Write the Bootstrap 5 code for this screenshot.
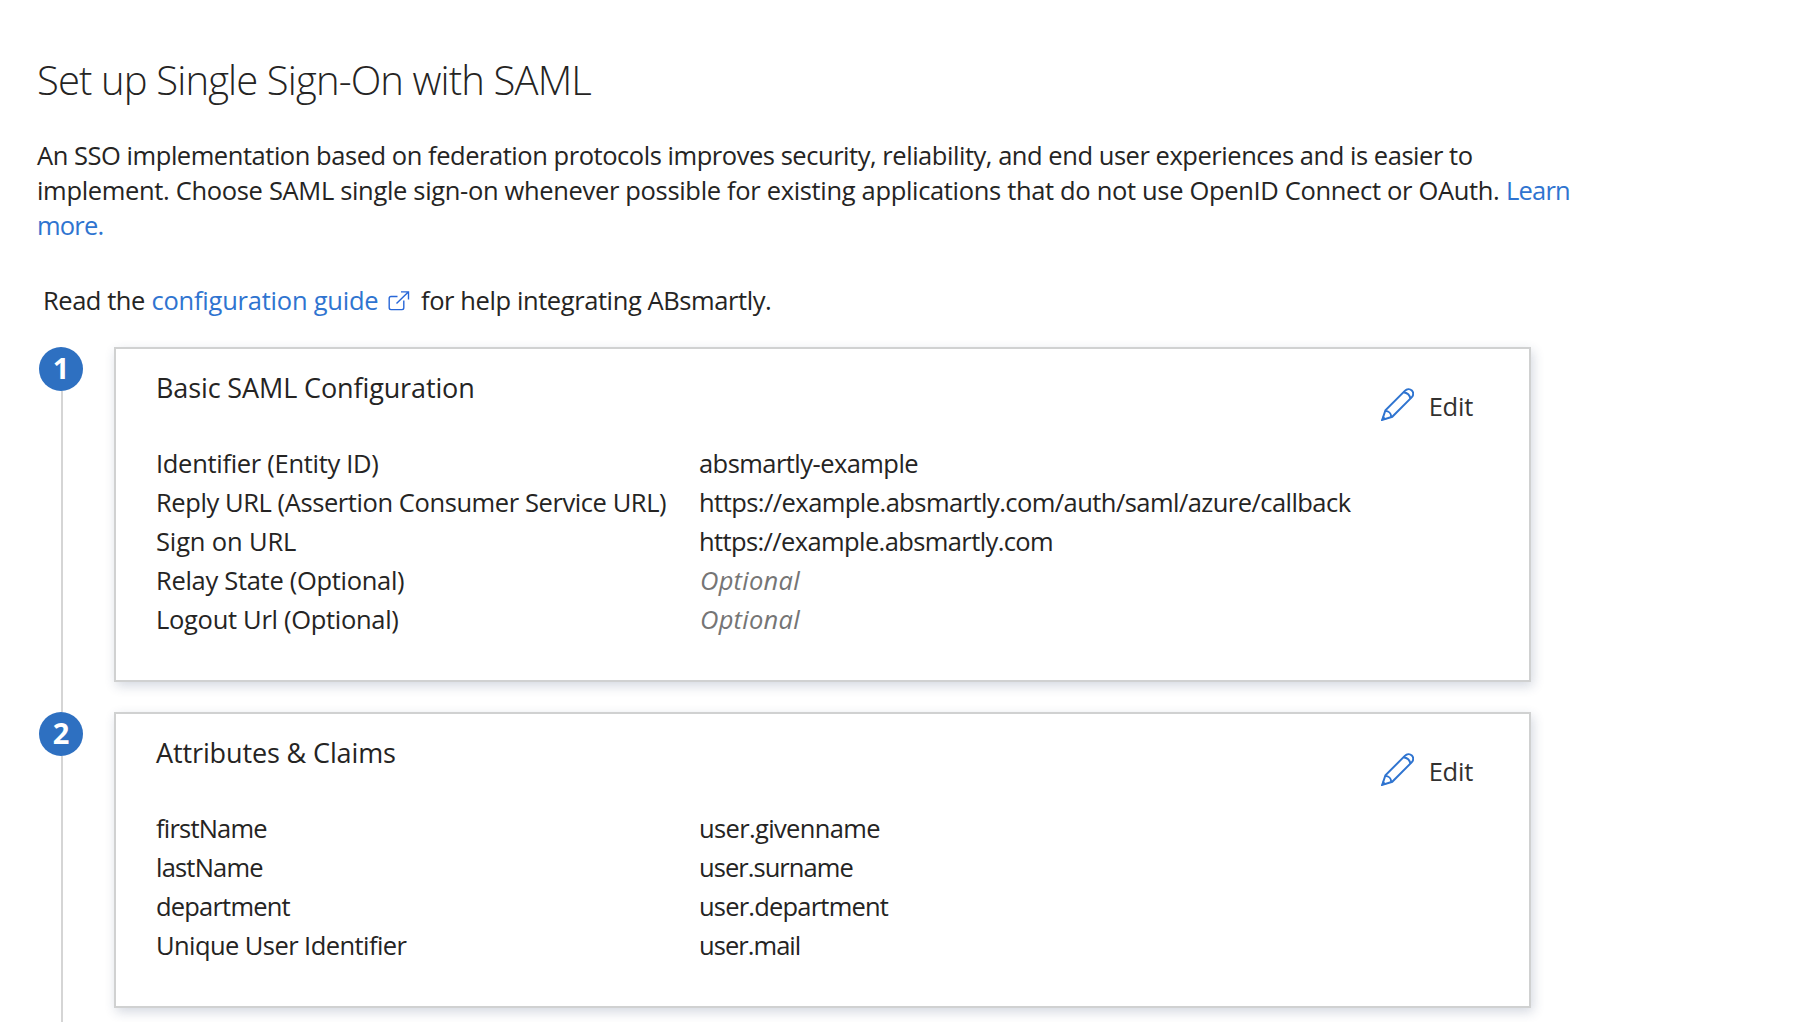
<!DOCTYPE html>
<html lang="en">
<head>
<meta charset="utf-8">
<title>Set up Single Sign-On with SAML</title>
<link rel="stylesheet" href="https://cdn.jsdelivr.net/npm/bootstrap@5.3.0/dist/css/bootstrap.min.css">
<style>
body { font-family: "Open Sans", "Noto Sans", sans-serif; font-size: 25.5px; line-height: 35px; color: #252423; background: #fff; }
.page { height: 1022px; padding: 53px 0 0 36px; white-space: nowrap; }
.page-title { font-size: 40px; line-height: 54px; font-weight: 300; letter-spacing: -.87px; margin: 0 0 31px 1px; }
.page a { color: #2f74d0; text-decoration: none; }
.intro { margin: 0 0 40px 1px; }
.intro-a { letter-spacing: -.458px; }
.intro-b { letter-spacing: -.332px; }
.intro-c { letter-spacing: -.8px; }
.guide { margin: 0 0 29px 7px; }
.guide-read { width: 108.5px; letter-spacing: -.454px; }
.guide-link { width: 236.5px; letter-spacing: -.23px; }
.guide-icon { width: 33px; padding-top: 8px; }
.guide-help { letter-spacing: -.41px; }
.step { gap: 31px; }
.step-rail { width: 44px; margin-left: 3px; }
.step-number { width: 44px; height: 44px; background: #2e70c1; color: #fff; font-size: 29px; font-weight: 700; line-height: 42px; }
.step-line { width: 2px; margin-left: 2px; background: #d5d5d5; }
.step-card { width: 1417px; border: 2px solid #d0d1d1; box-shadow: 2px 4px 11px rgba(40, 60, 100, .2); padding: 21px 56px 0 40px; }
.step-gap { padding-bottom: 30px; }
.tall { height: 335px; }
.short { height: 296px; }
.step-head { height: 74px; }
.step-head h2 { font-size: 27px; line-height: 36px; font-weight: 400; letter-spacing: -.12px; margin: 0; }
.edit-btn { border: 0; background: none; padding: 19px 0 0; color: #323130; gap: 15px; letter-spacing: -.236px; line-height: 35px; }
.edit-btn svg { margin-top: -1px; }
.pair { line-height: 39px; }
.pair-key { width: 543px; letter-spacing: -.3px; }
.pair-value { letter-spacing: -.55px; }
.pair-value.empty { color: #757575; font-style: italic; letter-spacing: .25px; padding-left: 1px; }
.k-reply { letter-spacing: -.415px; }
.k-sign { letter-spacing: -.146px; }
.k-tight, .pair-value.k-tight { letter-spacing: -.8px; }
.k-unique { letter-spacing: -.571px; }
.pair-value.v-host { letter-spacing: -.61px; }
.pair-value.v-given { letter-spacing: -.65px; }
.pair-value.v-short { letter-spacing: -.95px; }
</style>
<script src="https://cdn.jsdelivr.net/npm/bootstrap@5.3.0/dist/js/bootstrap.bundle.min.js"></script>
</head>
<body class="overflow-hidden">
<svg class="d-none">
  <symbol id="pencil" viewBox="0 0 32 32">
    <g fill="none" stroke="#2f74d0" stroke-width="1.9">
      <path d="M1.2 30.9 4.3 21.6 23.1 2.8C25 .9 28 .7 29.9 2.5s1.700 4.700-.2 6.600L10.900 27.900z"/>
      <path d="M21.800 4.100C25.200 4.600 28 7.200 28.500 10.300M4.100 22.200C7.300 22.300 9.900 24.700 10 28.100"/>
    </g>
    <path fill="#2f74d0" d="M.2 31.800 1.900 26.900 5.400 30.200z"/>
  </symbol>
</svg>
<main class="page overflow-hidden">
  <h1 class="page-title">Set up Single Sign-On with SAML</h1>
  <p class="intro"><span class="intro-a">An SSO implementation based on federation protocols improves security, reliability, and end user experiences and is easier to</span><br><span class="intro-b">implement. Choose SAML single sign-on whenever possible for existing applications that do not use OpenID Connect or OAuth.</span> <a href="#" class="intro-c">Learn<br>more.</a></p>
  <div class="guide d-flex">
    <span class="guide-read">Read the</span>
    <a href="#" class="guide-link">configuration guide</a>
    <a href="#" class="guide-icon d-flex"><svg width="22" height="20" viewBox="0 0 22 20" fill="none" stroke="#2867d8" stroke-width="1.4"><path d="M9.500 5.500H3Q1.200 5.500 1.200 7.300V16.800Q1.200 18.600 3 18.600H14Q15.800 18.600 15.800 16.800V9.500M8.500 12.500 20.300 1M13 .9H20.500V8.500"/></svg></a>
    <span class="guide-help">for help integrating ABsmartly.</span>
  </div>

  <section class="step d-flex">
    <div class="step-rail d-flex flex-column align-items-center">
      <div class="step-number rounded-circle text-center">1</div>
      <div class="step-line flex-grow-1"></div>
    </div>
    <div class="step-gap">
      <div class="step-card tall">
        <div class="step-head d-flex justify-content-between align-items-start">
          <h2>Basic SAML Configuration</h2>
          <button class="edit-btn d-flex"><svg width="33" height="33"><use href="#pencil"/></svg>Edit</button>
        </div>
        <div class="pair d-flex"><div class="pair-key">Identifier (Entity ID)</div><div class="pair-value">absmartly-example</div></div>
        <div class="pair d-flex"><div class="pair-key k-reply">Reply URL (Assertion Consumer Service URL)</div><div class="pair-value">https://example.absmartly.com/auth/saml/azure/callback</div></div>
        <div class="pair d-flex"><div class="pair-key k-sign">Sign on URL</div><div class="pair-value v-host">https://example.absmartly.com</div></div>
        <div class="pair d-flex"><div class="pair-key">Relay State (Optional)</div><div class="pair-value empty">Optional</div></div>
        <div class="pair d-flex"><div class="pair-key">Logout Url (Optional)</div><div class="pair-value empty">Optional</div></div>
      </div>
    </div>
  </section>

  <section class="step d-flex">
    <div class="step-rail d-flex flex-column align-items-center">
      <div class="step-number rounded-circle text-center">2</div>
      <div class="step-line flex-grow-1"></div>
    </div>
    <div class="step-gap">
      <div class="step-card short">
        <div class="step-head d-flex justify-content-between align-items-start">
          <h2>Attributes &amp; Claims</h2>
          <button class="edit-btn d-flex"><svg width="33" height="33"><use href="#pencil"/></svg>Edit</button>
        </div>
        <div class="pair d-flex"><div class="pair-key k-tight">firstName</div><div class="pair-value v-given">user.givenname</div></div>
        <div class="pair d-flex"><div class="pair-key k-tight">lastName</div><div class="pair-value v-short">user.surname</div></div>
        <div class="pair d-flex"><div class="pair-key k-tight">department</div><div class="pair-value k-tight">user.department</div></div>
        <div class="pair d-flex"><div class="pair-key k-unique">Unique User Identifier</div><div class="pair-value v-short">user.mail</div></div>
      </div>
    </div>
  </section>
</main>
</body>
</html>
